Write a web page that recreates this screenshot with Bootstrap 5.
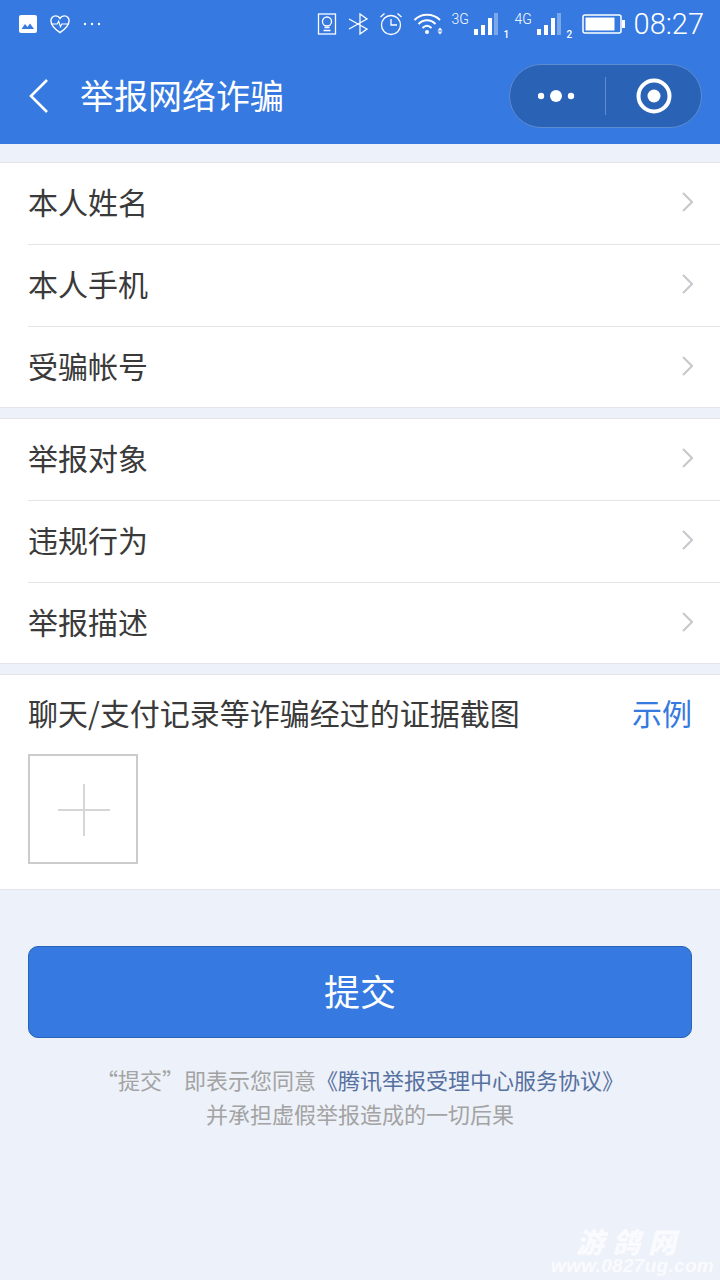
<!DOCTYPE html>
<html lang="zh-CN">
<head>
  <meta charset="UTF-8" />
  <meta name="viewport" content="width=device-width, initial-scale=1.0"/>
  <title>举报网络诈骗</title>
  <link href="https://cdn.jsdelivr.net/npm/bootstrap@5.3.2/dist/css/bootstrap.min.css" rel="stylesheet" />
  <style>
    body {
      width: 720px;
      height: 1280px;
      overflow: hidden;
      background: #edf1f9;
      font-family: "Noto Sans CJK SC", "Noto Sans", sans-serif;
      font-weight: 400;
      color: #3a3a3a;
      position: relative;
    }
    .app-head { background: #3579e1; height: 144px; color: #fff; }
    .status-bar { height: 48px; padding: 0 16px 0 17px; }
    .clock { font-family: Roboto, sans-serif; font-size: 29px; font-weight: 300; line-height: 48px; margin-left: 8px; }
    .net-label { font-family: Roboto, sans-serif; font-size: 14px; font-weight: 300; line-height: 14px; align-self: flex-start; margin-top: 12px; width: 18px; }
    .sim-num { font-family: Roboto, sans-serif; font-size: 10px; font-weight: 500; line-height: 10px; align-self: flex-end; margin-bottom: 8px; width: 6px; }
    .gap-3px { margin-left: 3px; }
    .gap-5px { margin-left: 5px; }
    .gap-9px { margin-left: 9px; }
    .gap-10px { margin-left: 10px; }
    .gap-11px { margin-left: 11px; }
    .title-row { height: 96px; padding-left: 28px; padding-right: 18px; }
    .page-title { font-size: 34px; line-height: 48px; margin-left: 30px; padding-bottom: 2px; }
    .capsule {
      width: 193px; height: 64px; border-radius: 32px;
      background: #2a62b5; border: 1px solid #5d8bcf;
    }
    .capsule-side { width: 50%; }
    .capsule-line { width: 1px; height: 38px; background: #5d8bcf; }
    .form-group-box { background: #fff; border-top: 1px solid #e3e5ea; border-bottom: 1px solid #e3e5ea; }
    .form-row-item { height: 82px; margin-left: 28px; padding-right: 27px; padding-bottom: 4px; font-size: 30px; border-bottom: 1px solid #e5e5e5; }
    .form-row-item:last-child { border-bottom: 0; height: 80px; }
    .row-arrow { margin-top: 1px; }
    .first-box { margin-top: 18px; }
    .next-box { margin-top: 10px; }
    .evidence-box { height: 216px; padding: 0 28px; }
    .evidence-head { height: 79px; padding-bottom: 4px; font-size: 30px; }
    .sample-link { color: #3579e1; }
    .add-tile { width: 110px; height: 110px; padding: 1px 0 0 1px; border: 2px solid #ccc; }
    .submit-btn {
      display: block; width: 664px; height: 92px; margin: 56px 28px 0; padding-bottom: 10px;
      background: #3579e1; border: 1px solid #2a62b5; border-radius: 10px;
      color: #fff; font-size: 36px; font-weight: 400;
    }
    .submit-btn:hover { background: #3579e1; border-color: #2a62b5; color: #fff; }
    .agree-note { margin-top: 24px; font-size: 22px; line-height: 34px; color: #a3a3a3; text-align: center; }
    .agree-link { color: #56709f; }
    .watermark {
      position: absolute; right: 6px; bottom: 4px;
      color: #fafbfe; font-style: italic; font-weight: 700;
    }
    .watermark-cn { font-size: 28px; font-weight: 900; letter-spacing: 8px; line-height: 30px; margin-right: 30px; text-align: right; }
    .watermark-url { font-family: "Liberation Sans", sans-serif; font-size: 19px; letter-spacing: .3px; line-height: 20px; white-space: nowrap; }
  </style>
</head>
<body>
  <div class="app-head">
    <div class="status-bar d-flex align-items-center justify-content-between">
      <div class="d-flex align-items-center">
        <svg width="22" height="20" viewBox="0 0 22 20"><rect x="2" y="1" width="18" height="18" rx="2" fill="#fff"/><path d="M4.500 15l3.500-5 2.500 3 2.500-3.500 4 5.500z" fill="#3579e1"/></svg>
        <svg class="gap-10px" width="22" height="20" viewBox="0 0 24 22" fill="none" stroke="#fff" stroke-width="1.500"><path d="M12 20.500C6 16.500 2 12 2 7.500 2 4.500 4.300 2 7 2c2 0 4 1 5 3 1-2 3-3 5-3 2.700 0 5 2.500 5 5.500C22 12 18 16.500 12 20.500z"/><path d="M3 11h6l1.500-3 2 6 1.500-3h7" stroke-width="1.200"/></svg>
        <svg class="gap-11px" width="20" height="20" viewBox="0 0 20 20" fill="#fff"><circle cx="3" cy="10" r="1.200"/><circle cx="10" cy="10" r="1.200"/><circle cx="17" cy="10" r="1.200"/></svg>
      </div>
      <div class="d-flex align-items-center">
        <svg width="20" height="22" viewBox="0 0 20 22" fill="none" stroke="#fff" stroke-width="1.300"><rect x="1.500" y="1" width="17" height="20"/><circle cx="10" cy="8.500" r="4.500"/><path d="M7.500 14.500h5M6.500 17.500h7"/></svg>
        <svg class="gap-11px" width="22" height="22" viewBox="0 0 22 22" fill="none" stroke="#fff" stroke-width="1.300"><path d="M1 6l18 10-7 5V1l7 5L1 16"/></svg>
        <svg class="gap-9px" width="24" height="24" viewBox="0 0 24 24" fill="none" stroke="#fff" stroke-width="1.300"><circle cx="12" cy="13" r="9.500"/><path d="M12 7v6h6M1.500 5l4-3.500M22.500 5l-4-3.500"/></svg>
        <svg class="gap-10px" width="30" height="24" viewBox="0 0 30 24" fill="none" stroke="#fff" stroke-width="2"><path d="M1.500 8C8 1 20 1 27 8M5.500 12c5-5 12-5 17 0M9.500 16c3-3 6-3 9 0"/><circle cx="14" cy="20" r="2" fill="#fff" stroke="none"/><path d="M24.500 18.500l2.500-3 2.500 3zM24.500 19.500l2.500 3 2.500-3z" fill="#fff" stroke="none"/></svg>
        <span class="net-label gap-9px">3G</span>
        <svg class="gap-3px" width="26" height="24" viewBox="0 0 26 24" fill="#fff"><rect x="1" y="17" width="4" height="6"/><rect x="8" y="13" width="4" height="10"/><rect x="15" y="6" width="4" height="17"/><rect x="21" y="1" width="4" height="22" opacity=".35"/></svg>
        <span class="sim-num gap-5px">1</span>
        <span class="net-label gap-5px">4G</span>
        <svg class="gap-3px" width="26" height="24" viewBox="0 0 26 24" fill="#fff"><rect x="1" y="17" width="4" height="6"/><rect x="8" y="13" width="4" height="10"/><rect x="15" y="6" width="4" height="17"/><rect x="21" y="1" width="4" height="22" opacity=".35"/></svg>
        <span class="sim-num gap-5px">2</span>
        <svg class="gap-9px" width="44" height="20" viewBox="0 0 44 20"><rect x="1" y="1" width="38" height="18" rx="2" fill="none" stroke="#fff" stroke-width="1.500"/><rect x="3.500" y="3.500" width="29" height="13" fill="#fff"/><rect x="40" y="6" width="3" height="8" fill="#fff"/></svg>
        <span class="clock">08:27</span>
      </div>
    </div>
    <div class="title-row d-flex align-items-center justify-content-between">
      <div class="d-flex align-items-center">
        <svg width="22" height="36" viewBox="0 0 22 36" fill="none" stroke="#fff" stroke-width="2.600"><path d="M19 2L3 18l16 16"/></svg>
        <span class="page-title">举报网络诈骗</span>
      </div>
      <div class="capsule d-flex align-items-center">
        <div class="capsule-side d-flex justify-content-center">
          <svg width="40" height="14" viewBox="0 0 40 14" fill="#fff"><circle cx="3" cy="7" r="3.200"/><circle cx="18" cy="7" r="6"/><circle cx="33" cy="7" r="3.200"/></svg>
        </div>
        <div class="capsule-line"></div>
        <div class="capsule-side d-flex justify-content-center">
          <svg width="36" height="36" viewBox="0 0 36 36"><circle cx="18" cy="18" r="15.500" fill="none" stroke="#fff" stroke-width="4"/><circle cx="18" cy="18" r="6.500" fill="#fff"/></svg>
        </div>
      </div>
    </div>
  </div>

  <div class="form-group-box first-box">
    <div class="form-row-item d-flex align-items-center justify-content-between">本人姓名<svg class="row-arrow" width="12" height="20" viewBox="0 0 12 20" fill="none" stroke="#c7c7cc" stroke-width="2"><path d="M2 1l9 9-9 9"/></svg></div>
    <div class="form-row-item d-flex align-items-center justify-content-between">本人手机<svg class="row-arrow" width="12" height="20" viewBox="0 0 12 20" fill="none" stroke="#c7c7cc" stroke-width="2"><path d="M2 1l9 9-9 9"/></svg></div>
    <div class="form-row-item d-flex align-items-center justify-content-between">受骗帐号<svg class="row-arrow" width="12" height="20" viewBox="0 0 12 20" fill="none" stroke="#c7c7cc" stroke-width="2"><path d="M2 1l9 9-9 9"/></svg></div>
  </div>

  <div class="form-group-box next-box">
    <div class="form-row-item d-flex align-items-center justify-content-between">举报对象<svg class="row-arrow" width="12" height="20" viewBox="0 0 12 20" fill="none" stroke="#c7c7cc" stroke-width="2"><path d="M2 1l9 9-9 9"/></svg></div>
    <div class="form-row-item d-flex align-items-center justify-content-between">违规行为<svg class="row-arrow" width="12" height="20" viewBox="0 0 12 20" fill="none" stroke="#c7c7cc" stroke-width="2"><path d="M2 1l9 9-9 9"/></svg></div>
    <div class="form-row-item d-flex align-items-center justify-content-between">举报描述<svg class="row-arrow" width="12" height="20" viewBox="0 0 12 20" fill="none" stroke="#c7c7cc" stroke-width="2"><path d="M2 1l9 9-9 9"/></svg></div>
  </div>

  <div class="form-group-box next-box evidence-box">
    <div class="evidence-head d-flex align-items-center justify-content-between">
      <span>聊天/支付记录等诈骗经过的证据截图</span>
      <span class="sample-link">示例</span>
    </div>
    <div class="add-tile d-flex align-items-center justify-content-center">
      <svg width="52" height="52" viewBox="0 0 52 52" stroke="#d6d6d6" stroke-width="2"><path d="M0 26h52M26 0v52"/></svg>
    </div>
  </div>

  <button type="button" class="btn submit-btn">提交</button>
  <div class="agree-note">“提交”即表示您同意<span class="agree-link">《腾讯举报受理中心服务协议》</span><br>并承担虚假举报造成的一切后果</div>

  <div class="watermark">
    <div class="watermark-cn">游鸽网</div>
    <div class="watermark-url">www.0827ug.com</div>
  </div>
</body>
</html>
